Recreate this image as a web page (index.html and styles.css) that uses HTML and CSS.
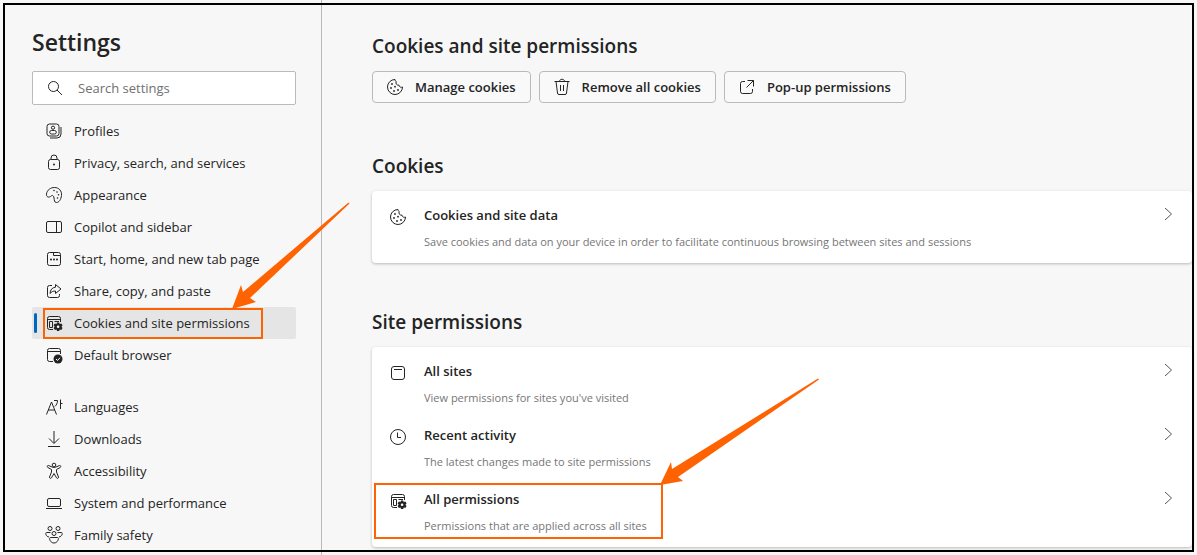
FILE: index.html
```html
<!DOCTYPE html>
<html lang="en">
<head>
<meta charset="utf-8">
<title>Settings</title>
<link rel="stylesheet" href="styles.css">
</head>
<body>
<svg class="sprite" aria-hidden="true">
  <symbol id="cookie" viewBox="0 0 18 18"><path d="M9 1.500A7.500 7.500 0 1 0 16.500 9C15 9.800 13.200 9 13 7.200C11 7.500 9.200 5.500 10.200 3.700C9.500 3.200 9.200 2.400 9 1.500Z"/><g class="solid"><circle cx="6" cy="6" r=".9"/><circle cx="9" cy="8.700" r=".9"/><circle cx="5" cy="10" r=".9"/><circle cx="8" cy="13" r=".9"/><circle cx="12" cy="12" r=".9"/></g></symbol>
  <symbol id="site-gear" viewBox="0 0 18 18"><path d="M8 15.500H4.500A2 2 0 0 1 2.500 13.500V4.500A2 2 0 0 1 4.500 2.500H13.500A2 2 0 0 1 15.500 4.500V8M2.500 5.500H15.500M4.500 7.500H7.500V13.500H4.500ZM9.500 7.500H14"/><path class="solid" d="M12 8.500H14.200L14.700 10L16.300 9.500L17.600 11.300L16.500 12.700L17.600 14.100L16.300 15.900L14.700 15.400L14.200 17H12L11.500 15.400L9.900 15.900L8.600 14.100L9.700 12.700L8.600 11.300L9.900 9.500L11.500 10Z"/><circle class="hole" cx="13.100" cy="12.700" r="1.300"/></symbol>
  <symbol id="chevron" viewBox="0 0 18 18"><path d="M6 3L12.500 9L6 15"/></symbol>
</svg>
<div class="page">
  <aside class="sidebar">
    <h1>Settings</h1>
    <div class="search">
      <svg class="icon" viewBox="0 0 18 18"><circle cx="7.500" cy="7.500" r="5"/><path d="M11 11L16 16"/></svg>
      <input type="text" placeholder="Search settings" aria-label="Search settings">
    </div>
    <nav>
      <ul>
        <li><a href="#"><svg class="icon" viewBox="0 0 18 18"><rect x="2" y="2" width="12" height="12" rx="2.500"/><path d="M16 5V12A4 4 0 0 1 12 16H5"/><circle cx="8" cy="5.700" r="1.600"/><rect x="4.700" y="8.500" width="6.600" height="3.500" rx="1.700"/></svg>Profiles</a></li>
        <li><a href="#"><svg class="icon" viewBox="0 0 18 18"><rect x="3.500" y="5.500" width="11" height="10" rx="2"/><path d="M6 5.500V4A3 3 0 0 1 12 4V5.500"/><circle class="solid" cx="9" cy="10.500" r="1"/></svg>Privacy, search, and services</a></li>
        <li><a href="#"><svg class="icon" viewBox="0 0 18 18"><path d="M1.500 8C2 4 5.500 1.500 9.500 1.500C14 1.500 17 5 16.500 9.500C16 13.500 14 16.500 11.500 16.500C9 16.500 9.500 14 9 12C8.500 9 7 9 5.500 10.500C3.500 12 1 10.500 1.500 8Z"/><g class="solid"><circle cx="9" cy="4.500" r=".8"/><circle cx="12" cy="6" r=".8"/><circle cx="13.500" cy="8.700" r=".8"/><circle cx="12.500" cy="12" r=".8"/></g></svg>Appearance</a></li>
        <li><a href="#"><svg class="icon" viewBox="0 0 18 18"><rect x="1.500" y="3.500" width="15" height="11" rx="1.500"/><path d="M11.500 3.500V14.500"/></svg>Copilot and sidebar</a></li>
        <li><a href="#"><svg class="icon" viewBox="0 0 18 18"><rect x="2.500" y="2.500" width="13" height="13" rx="2"/><path d="M8.500 2.500V5.500H15.500"/><g class="solid"><circle cx="6" cy="9.500" r="1"/><circle cx="9" cy="9.500" r="1"/><circle cx="12" cy="9.500" r="1"/></g></svg>Start, home, and new tab page</a></li>
        <li><a href="#"><svg class="icon" viewBox="0 0 18 18"><path d="M7 3.500H4.500A2 2 0 0 0 2.500 5.500V13.500A2 2 0 0 0 4.500 15.500H12.500A2 2 0 0 0 14.500 13.500V12M10.500 2.500L16 7L10.500 11.500V9C8 9 6.500 9.800 5 11.500C5.300 8 7 5.500 10.500 5.200Z"/></svg>Share, copy, and paste</a></li>
        <li><a class="current" href="#" aria-current="page"><svg class="icon"><use href="#site-gear"/></svg>Cookies and site permissions</a></li>
        <li><a href="#"><svg class="icon" viewBox="0 0 18 18"><path d="M8 15.500H4.500A2 2 0 0 1 2.500 13.500V4.500A2 2 0 0 1 4.500 2.500H13.500A2 2 0 0 1 15.500 4.500V8M2.500 5.500H15.500"/><circle class="solid" cx="13" cy="13" r="4.500"/><path class="check" d="M11 13L12.500 14.500L15 11.800"/></svg>Default browser</a></li>
      </ul>
      <ul>
        <li><a href="#"><svg class="icon" viewBox="0 0 18 18"><path d="M1.500 16.500L6.500 4L11.500 16.500M3.200 12H9.800M9 2.500H12.500C12.500 5 11.500 7 9.800 8.500M15.500 1.500V11M15.500 5.500H17.500"/></svg>Languages</a></li>
        <li><a href="#"><svg class="icon" viewBox="0 0 18 18"><path d="M9 1V13M4 8.500L9 13.500L14 8.500M3 16.500H15"/></svg>Downloads</a></li>
        <li><a href="#"><svg class="icon" viewBox="0 0 18 18"><circle cx="9" cy="3" r="1.800"/><path d="M7 5L3.500 3.500C2.300 3.100 1.700 4.900 2.800 5.500L6.500 7.500V10L4.500 15C4.200 16.400 6 16.900 6.500 15.800L9 11.500L11.500 15.800C12 16.900 13.800 16.400 13.500 15L11.500 10V7.500L15.200 5.500C16.300 4.900 15.700 3.100 14.500 3.500L11 5C10 5.500 8 5.500 7 5Z"/></svg>Accessibility</a></li>
        <li><a href="#"><svg class="icon" viewBox="0 0 18 18"><rect x="2.500" y="4.500" width="13" height="8" rx="1.500"/><path d="M1 14.500H17"/></svg>System and performance</a></li>
        <li><a href="#"><svg class="icon" viewBox="0 0 18 18"><circle cx="5" cy="2.500" r="2"/><circle cx="13" cy="2.500" r="2"/><circle cx="9" cy="7.500" r="2"/><path d="M5.500 6.500H1.500C.2 6.500 .5 10.500 4 11M12.500 6.500H16.500C17.800 6.500 17.500 10.500 14 11M5.500 11.500H12.500C14.500 11.500 13 17 9 17C5 17 3.500 11.500 5.500 11.500Z"/></svg>Family safety</a></li>
      </ul>
    </nav>
    <svg class="arrow arrow-nav" viewBox="0 0 120 110" aria-hidden="true"><path d="M117.500 2.500L18 97L24 101L0 108L9 84L11 91L116.500 1.500Z"/></svg>
  </aside>
  <main>
    <h2>Cookies and site permissions</h2>
    <div class="actions">
      <button type="button"><svg class="icon"><use href="#cookie"/></svg>Manage cookies</button>
      <button type="button"><svg class="icon" viewBox="0 0 18 18"><path d="M1.500 3.500H16.500M6.500 3.500C6.500 .5 11.500 .5 11.500 3.500M3 3.500L4.500 15A1.500 1.500 0 0 0 6 16.500H12A1.500 1.500 0 0 0 13.500 15L15 3.500M7.500 7V13M10.500 7V13"/></svg>Remove all cookies</button>
      <button type="button"><svg class="icon" viewBox="0 0 18 18"><path d="M7 3.500H4.500A2 2 0 0 0 2.500 5.500V13.500A2 2 0 0 0 4.500 15.500H12.500A2 2 0 0 0 14.500 13.500V11M9.500 2.500H15.500V8.500M15.500 2.500L8.500 9.500"/></svg>Pop-up permissions</button>
    </div>
    <section>
      <h2>Cookies</h2>
      <div class="card">
        <a class="row" href="#"><svg class="icon"><use href="#cookie"/></svg><span class="text"><strong>Cookies and site data</strong><small>Save cookies and data on your device in order to facilitate continuous browsing between sites and sessions</small></span><svg class="icon chevron"><use href="#chevron"/></svg></a>
      </div>
    </section>
    <section>
      <h2>Site permissions</h2>
      <div class="card">
        <a class="row" href="#"><svg class="icon" viewBox="0 0 18 18"><rect x="2.500" y="2.500" width="13" height="13" rx="2.500"/><path d="M5 5.500H13"/></svg><span class="text"><strong>All sites</strong><small>View permissions for sites you've visited</small></span><svg class="icon chevron"><use href="#chevron"/></svg></a>
        <a class="row" href="#"><svg class="icon" viewBox="0 0 18 18"><circle cx="9" cy="9" r="7.500"/><path d="M8.500 4.500V9.500H12"/></svg><span class="text"><strong>Recent activity</strong><small>The latest changes made to site permissions</small></span><svg class="icon chevron"><use href="#chevron"/></svg></a>
        <a class="row marked" href="#"><svg class="icon"><use href="#site-gear"/></svg><span class="text"><strong>All permissions</strong><small>Permissions that are applied across all sites</small></span><svg class="icon chevron"><use href="#chevron"/></svg></a>
        <svg class="arrow arrow-card" viewBox="0 0 160 108" aria-hidden="true"><path d="M159 1.500L18 99L23 103L0 107L11 84L12 91L158 .5Z"/></svg>
      </div>
    </section>
  </main>
</div>
<div class="frame"></div>
</body>
</html>
```
FILE: styles.css
```css
*, *::before, *::after { box-sizing: border-box; }
body {
  margin: 0;
  position: relative;
  background: #f7f7f7;
  color: #242424;
  font: 13px/20px "Open Sans", "Noto Sans", sans-serif;
}
.sprite { display: none; }
.page {
  display: grid;
  grid-template-columns: 322px minmax(0, 1fr);
  min-height: 100vh;
}
h1, h2 { margin: 0; font-weight: 600; }
h1 { font-size: 23px; line-height: 32px; }
h2 { font-size: 19px; line-height: 28px; }
a { color: inherit; text-decoration: none; }
.icon {
  width: 18px;
  height: 18px;
  flex: none;
  fill: none;
  stroke: currentColor;
  stroke-width: 1;
  overflow: visible;
}
.solid { fill: currentColor; stroke: none; }
.hole { fill: #fff; stroke: none; }
.check { stroke: #fff; }

.sidebar {
  position: relative;
  padding: 26px 25px 4px 32px;
  border-right: 1px solid #bababa;
}
.search {
  display: flex;
  align-items: center;
  gap: 14px;
  height: 34px;
  margin: 13px 0 10px;
  padding: 0 13px;
  background: #fff;
  border: 1px solid #bababa;
  border-radius: 2px;
}
.search input {
  flex: 1;
  min-width: 0;
  padding: 0;
  border: 0;
  outline: 0;
  background: none;
  color: inherit;
  font: inherit;
}
.search input::placeholder { color: #707070; opacity: 1; }
nav { display: grid; gap: 20px; }
nav ul { margin: 0; padding: 0; list-style: none; }
nav a {
  position: relative;
  display: flex;
  align-items: center;
  gap: 11px;
  height: 32px;
  padding-left: 13px;
  border-radius: 2px;
}
nav .current { background: #e5e5e5; }
nav .current::before {
  content: "";
  position: absolute;
  left: 2px;
  top: 6px;
  width: 3px;
  height: 20px;
  border-radius: 2px;
  background: #0067c0;
}
nav .current::after,
.marked::after {
  content: "";
  position: absolute;
  border: 2px solid #ff6200;
}
nav .current::after { left: 11px; top: 1px; width: 220px; height: 31px; }

main { padding: 32px 5px 8px 50px; }
.actions { display: flex; gap: 8px; margin-top: 11px; }
.actions button {
  display: flex;
  align-items: center;
  gap: 11px;
  height: 32px;
  padding: 0 14px 0 13px;
  border: 1px solid #bababa;
  border-radius: 4px;
  background: #f9f9f9;
  color: inherit;
  font: inherit;
  font-weight: 600;
}
section { margin-top: 45px; }
.actions + section { margin-top: 49px; }
.card {
  position: relative;
  margin-top: 11px;
  padding: 4px 0;
  border-radius: 4px;
  background: #fff;
  box-shadow: 0 1px 3px rgba(0, 0, 0, .25);
}
.row {
  position: relative;
  display: flex;
  gap: 17px;
  min-height: 64px;
  padding: 10px 15px 7px 17px;
}
.row .icon { margin-top: 3px; }
.row .chevron { margin-top: 0; color: #555; }
.text { flex: 1; display: grid; gap: 7px; align-content: start; }
.text strong { font-weight: 600; }
.text small { font-size: 11px; color: #767676; }
.marked::after { left: 2px; top: 4px; width: 289px; height: 56px; }

.arrow { position: absolute; z-index: 1; fill: #ff6200; pointer-events: none; }
.arrow-nav { left: 232px; top: 201px; width: 120px; height: 110px; }
.arrow-card { left: 288px; top: 31px; width: 160px; height: 108px; }
.frame {
  position: absolute;
  inset: 3px;
  z-index: 2;
  border: 2px solid #000;
  pointer-events: none;
}
```
